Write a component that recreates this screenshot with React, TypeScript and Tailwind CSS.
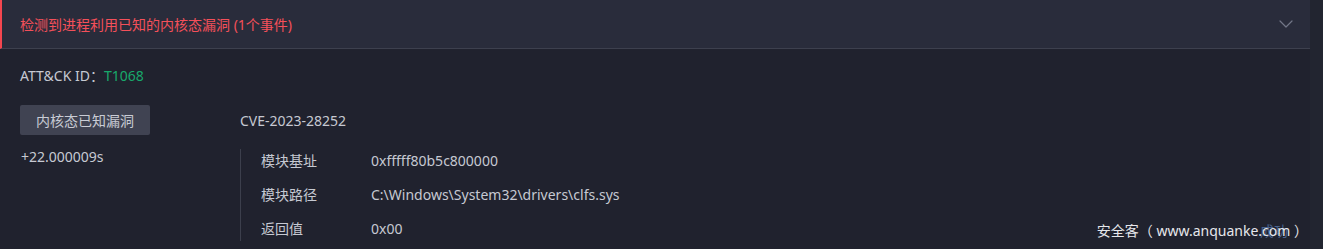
import { ChevronDown } from "lucide-react";

const rows = [
  { label: "模块基址", value: "0xfffff80b5c800000" },
  { label: "模块路径", value: "C:\\Windows\\System32\\drivers\\clfs.sys" },
  { label: "返回值", value: "0x00" },
];

export default function App() {
  return (
    <div
      className="flex h-[249px] w-full overflow-hidden bg-[#20222e] text-[14px] text-[#c6c9d2]"
      style={{ fontFamily: '"Noto Sans", "Noto Sans CJK SC", sans-serif' }}
    >
      <div className="relative flex-1">
        <div className="flex h-[49px] items-center justify-between border-b border-[#3d404e] border-l-2 border-l-[#f4464f] bg-[#292c3b] pl-[18px] pr-[12px]">
          <span className="text-[#f4505a]">检测到进程利用已知的内核态漏洞 (1个事件)</span>
          <ChevronDown className="h-6 w-6 text-[#727687]" strokeWidth={1.2} />
        </div>

        <div className="px-5 pt-[16px]">
          <div className="leading-[22px]">
            ATT&CK ID：<span className="text-[#18a86b]">T1068</span>
          </div>

          <div className="mt-[18px] flex">
            <div className="w-[220px]">
              <div className="flex h-[30px] w-[130px] items-center justify-center rounded-[2px] bg-[#404352] text-[#c9ccd5]">
                内核态已知漏洞
              </div>
              <div className="mt-[12px] pl-px leading-[20px]">+22.000009s</div>
            </div>
            <div>
              <div className="flex h-[30px] items-center">CVE-2023-28252</div>
              <div className="mt-[14px] flex flex-col gap-[12px] border-l border-[#3c3f4c] pb-[2px] pl-5">
                {rows.map((r) => (
                  <div key={r.label} className="flex h-[22px] items-center">
                    <span className="w-[110px]">{r.label}</span>
                    <span>{r.value}</span>
                  </div>
                ))}
              </div>
            </div>
          </div>
        </div>

        <div className="absolute bottom-[8px] right-[2px] whitespace-pre text-[14px] text-[#e6e7eb]">
          <span className="absolute right-[20px] top-0 text-[#5b7fb8] opacity-70">成功</span>
          <span className="relative">安全客（ www.anquanke.com ）</span>
        </div>
      </div>
      <div className="w-[13px] bg-[#222530]" />
    </div>
  );
}
